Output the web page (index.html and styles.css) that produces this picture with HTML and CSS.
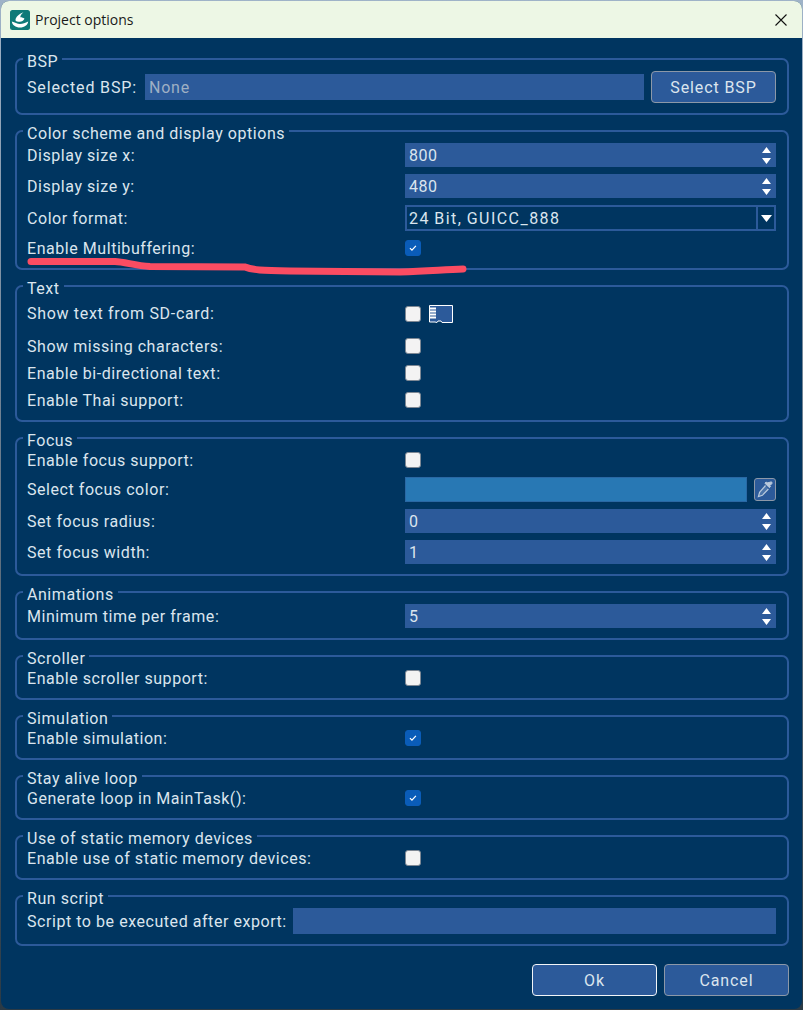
FILE: index.html
```html
<!DOCTYPE html>
<html lang="en">
<head>
<meta charset="utf-8">
<title>Project options</title>
<link rel="stylesheet" href="styles.css">
</head>
<body>
<div class="dialog">
  <header class="titlebar">
    <svg class="logo" viewBox="0 0 20 20"><rect width="20" height="20" rx="2.500" fill="#0f7a78"/><path d="M1.800 11.500c3 .8 5.500 2.600 8.200 2.600 2.800 0 5.200-1.300 8.200-2.600-.4 3.600-3.800 6-8.200 6s-7.800-2.400-8.200-6z" fill="#fff"/><path d="M5.500 10.200c0-3 3.400-6.300 8-8-2 1.900-3.200 3.400-3.200 5 1.600 0 3.200.5 4.200 1.500-1 2-2.700 3-4.700 3-1.700 0-4.300-.1-4.300-1.500z" fill="#fff"/></svg>
    <span class="title">Project options</span>
    <svg class="close" viewBox="0 0 12 12"><path d="M.5.5l11 11M11.500.5l-11 11" stroke="#111" stroke-width="1.100" fill="none"/></svg>
  </header>
  <main class="content">
    <fieldset class="group">
      <legend>BSP</legend>
      <div class="row bsp-row">
        <span class="bsp-label">Selected BSP:</span>
        <div class="field bsp-field muted">None</div>
        <div class="btn bsp-btn">Select BSP</div>
      </div>
    </fieldset>

    <fieldset class="group">
      <legend>Color scheme and display options</legend>
      <div class="rows">
        <div class="row"><span class="label">Display size x:</span><div class="field spin"><span>800</span><svg class="arrows" viewBox="0 0 9 17"><path d="M4.500 0L9 6H0zM0 11h9l-4.500 6z"/></svg></div></div>
        <div class="row"><span class="label">Display size y:</span><div class="field spin"><span>480</span><svg class="arrows" viewBox="0 0 9 17"><path d="M4.500 0L9 6H0zM0 11h9l-4.500 6z"/></svg></div></div>
        <div class="row"><span class="label">Color format:</span><div class="combo"><span class="combo-text">24 Bit, GUICC_888</span><span class="combo-arrow"><svg viewBox="0 0 11 7"><path d="M0 0h11L5.500 7z"/></svg></span></div></div>
        <div class="row check-row"><span class="label">Enable Multibuffering:</span><span class="check on"><svg viewBox="0 0 16 16"><path d="M4.500 8.200l2.300 2.300 4.500-5" /></svg></span></div>
      </div>
    </fieldset>

    <fieldset class="group">
      <legend>Text</legend>
      <div class="rows">
        <div class="row sd-row"><span class="label wide">Show text from SD-card:</span><span class="check"></span>
          <svg class="sd" viewBox="0 0 24 18"><path d="M.5.500h23v17H13l-1-1.500H9l-1 1.500-2-.5H.5z" fill="#2c5a9a" stroke="#fff"/><path d="M0 3.500h7M0 6.500h7M0 9.500h7M0 12.500h7" stroke="#fff" stroke-width="2" /></svg>
        </div>
        <div class="row check-row"><span class="label">Show missing characters:</span><span class="check"></span></div>
        <div class="row check-row"><span class="label">Enable bi-directional text:</span><span class="check"></span></div>
        <div class="row check-row"><span class="label">Enable Thai support:</span><span class="check"></span></div>
      </div>
    </fieldset>

    <fieldset class="group">
      <legend>Focus</legend>
      <div class="rows">
        <div class="row check-row"><span class="label">Enable focus support:</span><span class="check"></span></div>
        <div class="row color-row"><span class="label">Select focus color:</span><div class="swatch"></div>
          <div class="picker"><svg viewBox="0 0 20 21"><path d="M15.300 3.200c1-1 2.500.5 1.500 1.500l-2 2 .8.800-1.200 1.200-4.500-4.500L11.100 3l.9.900z" fill="#b9c9dc" stroke="#b9c9dc"/><path d="M10.500 6.500L4.600 13.400 3.400 17.500l4-1.200 6-6.300" fill="#4c75ab" stroke="#b9c9dc" stroke-width="1.200"/></svg></div>
        </div>
        <div class="row"><span class="label">Set focus radius:</span><div class="field spin"><span>0</span><svg class="arrows" viewBox="0 0 9 17"><path d="M4.500 0L9 6H0zM0 11h9l-4.500 6z"/></svg></div></div>
        <div class="row"><span class="label">Set focus width:</span><div class="field spin"><span>1</span><svg class="arrows" viewBox="0 0 9 17"><path d="M4.500 0L9 6H0zM0 11h9l-4.500 6z"/></svg></div></div>
      </div>
    </fieldset>

    <fieldset class="group">
      <legend>Animations</legend>
      <div class="row"><span class="label">Minimum time per frame:</span><div class="field spin"><span>5</span><svg class="arrows" viewBox="0 0 9 17"><path d="M4.500 0L9 6H0zM0 11h9l-4.500 6z"/></svg></div></div>
    </fieldset>

    <fieldset class="group">
      <legend>Scroller</legend>
      <div class="row check-row"><span class="label">Enable scroller support:</span><span class="check"></span></div>
    </fieldset>

    <fieldset class="group">
      <legend>Simulation</legend>
      <div class="row check-row"><span class="label">Enable simulation:</span><span class="check on"><svg viewBox="0 0 16 16"><path d="M4.500 8.200l2.300 2.300 4.500-5" /></svg></span></div>
    </fieldset>

    <fieldset class="group">
      <legend>Stay alive loop</legend>
      <div class="row check-row"><span class="label">Generate loop in MainTask():</span><span class="check on"><svg viewBox="0 0 16 16"><path d="M4.500 8.200l2.300 2.300 4.500-5" /></svg></span></div>
    </fieldset>

    <fieldset class="group">
      <legend>Use of static memory devices</legend>
      <div class="row check-row"><span class="label">Enable use of static memory devices:</span><span class="check"></span></div>
    </fieldset>

    <fieldset class="group">
      <legend>Run script</legend>
      <div class="row script-row"><span class="script-label">Script to be executed after export:</span><div class="field script-field"></div></div>
    </fieldset>

    <footer class="footer">
      <div class="btn primary">Ok</div>
      <div class="btn">Cancel</div>
    </footer>
  </main>
  <svg class="scribble" viewBox="0 0 803 1010"><path d="M31 261.500L115 261.500C125 262 135 265.500 150 266.500L245 267C252 270 262 270.500 290 271L400 272C430 271 445 269.500 463 269" fill="none" stroke="#fb4c62" stroke-width="7" stroke-linecap="round"/></svg>
</div>
</body>
</html>
```

FILE: styles.css
```css
* { box-sizing: border-box; }
html, body { margin: 0; height: 100%; }
body { background: linear-gradient(#9fb3c8, #2b3a45); font-family: Roboto, "Noto Sans", sans-serif; font-size: 16px; color: #dbe5ee; letter-spacing: .55px; overflow: hidden; }
.dialog { position: relative; width: 801px; height: 1008px; margin: 1px 0 0 1px; background: #003560; border-radius: 8px; overflow: hidden; }
.titlebar { height: 37px; background: #edf7e5; display: flex; align-items: center; padding: 0 15px 0 9px; }
.logo { width: 20px; height: 20px; flex: none; }
.title { margin-left: 5px; flex: 1; font-family: "Open Sans", "Noto Sans", sans-serif; font-size: 14px; letter-spacing: 0; color: #1a1a1a; }
.close { width: 12px; height: 12px; }
.content { padding: 10px 13px 0 14px; display: flex; flex-direction: column; gap: 5px; }
.group { margin: 0; min-width: 0; border: 2px solid #2c5a9a; border-radius: 7px; padding: 1px 11px 10px 10px; }
legend { padding: 5px 4px 0; margin-left: -4px; line-height: 17px; height: 22px; }
.rows { display: flex; flex-direction: column; gap: 7px; }
.row { display: flex; align-items: center; min-height: 24px; }
.check-row { min-height: 20px; }
.sd-row { min-height: 31px; }
.color-row { min-height: 25px; }
.label { width: 378px; flex: none; }
.wide { letter-spacing: .68px; }
.field { background: #2c5a9a; height: 24px; display: flex; align-items: center; padding: 0 4px; }
.spin { flex: 1; justify-content: space-between; }
.arrows { width: 9px; height: 17px; margin-right: 1px; fill: #fff; }
.bsp-row { min-height: 32px; }
.bsp-label { margin-right: 8px; letter-spacing: .85px; }
.bsp-field { flex: 1; height: 26px; }
.muted { color: #9fb0c4; letter-spacing: .8px; }
.btn { height: 32px; width: 125px; background: #2c5a9a; border: 1px solid #8c98a8; border-radius: 4px; display: flex; align-items: center; justify-content: center; letter-spacing: .9px; }
.bsp-btn { margin-left: 7px; }
.combo { flex: 1; height: 26px; border: 2px solid #2c5a9a; display: flex; align-items: center; }
.combo-text { flex: 1; padding-left: 2px; letter-spacing: 1.45px; word-spacing: -1px; }
.combo-arrow { width: 18px; height: 100%; border-left: 2px solid #2c5a9a; display: flex; align-items: center; justify-content: center; fill: #fff; }
.combo-arrow svg { width: 11px; height: 7px; }
.check { width: 16px; height: 16px; border-radius: 3px; background: #f3f3f3; border: 1px solid #7e8894; flex: none; }
.check.on { background: #0a5cb8; border-color: #0a5cb8; }
.check.on svg { display: block; width: 14px; height: 14px; fill: none; stroke: #fff; stroke-width: 1.400; }
.sd { width: 24px; height: 18px; margin-left: 8px; }
.swatch { width: 342px; height: 25px; background: #2878b4; border: 1px solid #2a68a4; flex: none; }
.picker { width: 22px; height: 23px; margin-left: 7px; background: #2c5a9a; border: 1px solid #8c98a8; border-radius: 3px; flex: none; }
.picker svg { display: block; width: 20px; height: 21px; }
.script-row { min-height: 26px; }
.script-label { margin-right: 6px; }
.script-field { flex: 1; height: 26px; }
.footer { display: flex; justify-content: flex-end; gap: 7px; margin-top: 13px; }
.primary { border-color: #f2f5f8; }
.scribble { position: absolute; left: -1px; top: -1px; width: 803px; height: 1010px; pointer-events: none; }
```
